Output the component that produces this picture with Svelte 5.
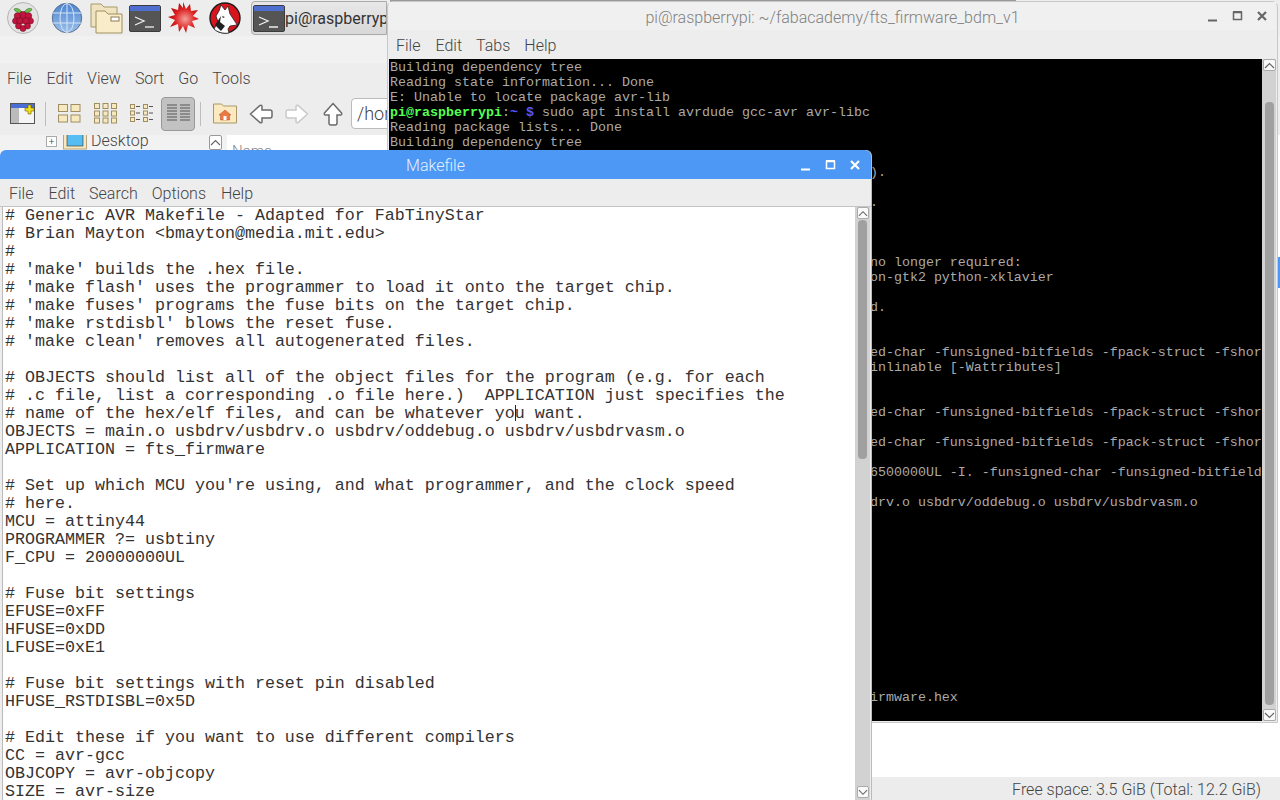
<script>
  const pad = " ".repeat(60);
  const termLines = [
    "Building dependency tree",
    "Reading state information... Done",
    "E: Unable to locate package avr-lib",
    null,
    "Reading package lists... Done",
    "Building dependency tree",
    "",
    pad + ").",
    "",
    pad + ".",
    "", "", "",
    pad + "no longer required:",
    pad + "on-gtk2 python-xklavier",
    "",
    pad + "d.",
    "", "",
    pad + "ed-char -funsigned-bitfields -fpack-struct -fshor",
    pad + "inlinable [-Wattributes]",
    "", "",
    pad + "ed-char -funsigned-bitfields -fpack-struct -fshor",
    "",
    pad + "ed-char -funsigned-bitfields -fpack-struct -fshor",
    "",
    pad + "6500000UL -I. -funsigned-char -funsigned-bitfield",
    "",
    pad + "drv.o usbdrv/oddebug.o usbdrv/usbdrvasm.o",
    "", "", "", "", "", "", "", "", "", "", "", "",
    pad + "irmware.hex",
  ];

  const makefile = `# Generic AVR Makefile - Adapted for FabTinyStar
# Brian Mayton <bmayton@media.mit.edu>
#
# 'make' builds the .hex file.
# 'make flash' uses the programmer to load it onto the target chip.
# 'make fuses' programs the fuse bits on the target chip.
# 'make rstdisbl' blows the reset fuse.
# 'make clean' removes all autogenerated files.

# OBJECTS should list all of the object files for the program (e.g. for each
# .c file, list a corresponding .o file here.)  APPLICATION just specifies the
# name of the hex/elf files, and can be whatever you want.
OBJECTS = main.o usbdrv/usbdrv.o usbdrv/oddebug.o usbdrv/usbdrvasm.o
APPLICATION = fts_firmware

# Set up which MCU you're using, and what programmer, and the clock speed
# here.
MCU = attiny44
PROGRAMMER ?= usbtiny
F_CPU = 20000000UL

# Fuse bit settings
EFUSE=0xFF
HFUSE=0xDD
LFUSE=0xE1

# Fuse bit settings with reset pin disabled
HFUSE_RSTDISBL=0x5D

# Edit these if you want to use different compilers
CC = avr-gcc
OBJCOPY = avr-objcopy
SIZE = avr-size`;
</script>

{#snippet termIcon(w, h)}
  <svg width={w} height={h} viewBox="0 0 32 27">
    <rect x="0.5" y="0.5" width="31" height="26" rx="1.5" fill="#555" stroke="#3c3c3c" />
    <rect x="1" y="1" width="30" height="5" fill="#4f6fd0" />
    <path d="M6 12l9 4-9 4" fill="none" stroke="#eee" stroke-width="1.3" />
    <path d="M16 22h9" stroke="#eee" stroke-width="1.3" />
  </svg>
{/snippet}

{#snippet folderMini(x, y, w, h)}
  <rect {x} {y} width={w} height={h} fill="#f6e9c0" stroke="#a08e62" />
{/snippet}

{#snippet arrow(color, rotate)}
  <svg width="24" height="24" viewBox="0 0 24 24">
    <path
      d="M1.5 12 11 3.5q2-.8 2 1v3.5h8q2 0 2 2v4q0 2-2 2h-8v3.500q0 1.800-2 1z"
      fill="#fff"
      stroke={color}
      stroke-width="1.500"
      transform="rotate({rotate} 12 12)"
    />
  </svg>
{/snippet}

{#snippet chevron(up)}
  <svg width="11" height="7" viewBox="0 0 11 7">
    <path d={up ? "M1 6l4.500-4.500L10 6" : "M1 1l4.500 4.500L10 1"} fill="none" stroke="#666" stroke-width="1.200" />
  </svg>
{/snippet}

{#snippet winButtons(color)}
  <div class="controls">
    <svg width="14" height="14" viewBox="0 0 14 14"><path d="M1 11.500h9" stroke={color} stroke-width="2" /></svg>
    <svg width="14" height="14" viewBox="0 0 14 14"><path d="M2.500 3.500h8v7h-8z" fill="none" stroke={color} stroke-width="1.500" /><path d="M2 3h9" stroke={color} stroke-width="2" /></svg>
    <svg width="14" height="14" viewBox="0 0 14 14"><path d="M3 3l8 8M11 3l-8 8" stroke={color} stroke-width="2.200" /></svg>
  </div>
{/snippet}

<div class="desktop">
  <header class="panel">
    <div class="launchers">
      <svg class="app" width="34" height="34" viewBox="0 0 34 34">
        <circle cx="17" cy="17" r="15.500" fill="#e4e4e4" stroke="#b5b5b5" />
        <path d="M16 11c-3-4-6-4-8-3 1 3 4 4 8 3zM18 11c3-4 6-4 8-3-1 3-4 4-8 3z" fill="#6cc04a" stroke="#2d6b22" stroke-width=".6" />
        <g fill="#c3143c" stroke="#5c0a22" stroke-width=".5">
          <circle cx="17" cy="14" r="3.600" /><circle cx="11.500" cy="15" r="3.300" /><circle cx="22.500" cy="15" r="3.300" />
          <circle cx="9.500" cy="20" r="3" /><circle cx="24.500" cy="20" r="3" /><circle cx="14" cy="20" r="3.400" />
          <circle cx="20" cy="20" r="3.400" /><circle cx="12.500" cy="25" r="3" /><circle cx="21.500" cy="25" r="3" /><circle cx="17" cy="27.500" r="3" />
        </g>
      </svg>
      <svg class="app globe" width="32" height="32" viewBox="0 0 32 32">
        <defs><linearGradient id="gl" x1="0" y1="0" x2="0" y2="1"><stop offset="0" stop-color="#4a83d0" /><stop offset="1" stop-color="#9cc0ea" /></linearGradient></defs>
        <circle cx="16" cy="16" r="14.700" fill="url(#gl)" stroke="#58708e" />
        <g fill="none" stroke="#d5e4f6" stroke-width="1">
          <ellipse cx="16" cy="16" rx="7" ry="14.500" /><path d="M16 1.500v29M2 11h28M2 21h28" />
        </g>
      </svg>
      <svg class="app folder" width="34" height="32" viewBox="0 0 34 32">
        <path d="M1 2h10l3 3h13v20H1z" fill="#efe3c0" stroke="#a89868" />
        <path d="M6 9h9l3 3h14v19H6z" fill="#f8edc8" stroke="#a08e62" />
        <rect x="21" y="15" width="8" height="4" fill="#fff" stroke="#8b7c58" />
      </svg>
      <span class="app term">{@render termIcon(32, 27)}</span>
      <svg class="app star" width="32" height="32" viewBox="0 0 32 32">
        <defs><radialGradient id="st" cx=".55" cy=".55" r=".55"><stop offset="0" stop-color="#f4a09a" /><stop offset=".6" stop-color="#dd2222" /><stop offset="1" stop-color="#a80d0d" /></radialGradient></defs>
        <path d="M16 0l3 7 4-5 1 7 7-1-5 6 6 3-7 2 3 7-7-3-2 8-3-7-4 6-1-8-8 3 5-7-7-3 7-2-4-7 7 2 1-7 4 5z" fill="url(#st)" />
      </svg>
      <svg class="app wolf" width="32" height="32" viewBox="0 0 32 32">
        <circle cx="16" cy="16" r="15" fill="#d8141c" stroke="#1a1a1a" stroke-width="1.400" />
        <path d="M12 3l4 5 3-4 2 8 6 9 1 2-7 1-2 3 1 4c-6 1-12-1-15-4l4-7-2-6 3-5z" fill="#fff" stroke="#222" stroke-width=".8" />
        <path d="M13 14l3 1-2 1zM6 23l6-9-1 6 5 4-4 5z" fill="#222" />
      </svg>
    </div>
    <div class="task">
      {@render termIcon(32, 27)}
      <span>pi@raspberrypi: ~/fabacademy</span>
    </div>
    <div class="task-edge"></div>
  </header>

  <main class="fm">
    <div class="fm-title"></div>
    <nav class="menu fm-menu">
      <span>File</span><span>Edit</span><span>View</span><span>Sort</span><span>Go</span><span>Tools</span>
    </nav>
    <div class="toolbar">
      <button class="tool">
        <svg width="25" height="21" viewBox="0 0 25 21">
          <rect x=".5" y=".5" width="24" height="20" fill="#f5f5f5" stroke="#555" />
          <rect x="1" y="1" width="23" height="4" fill="#4a6ed6" />
          <rect x="1" y="5" width="8" height="15" fill="#bbb" />
          <path d="M18 2h3v3h3v3h-3v3h-3V8h-3V5h3z" fill="#f4e020" stroke="#6b6200" stroke-width=".6" />
        </svg>
      </button>
      <i class="sep"></i>
      <button class="tool">
        <svg width="23" height="19" viewBox="0 0 23 19">
          {@render folderMini(.5, .5, 9, 7)}{@render folderMini(13, .5, 9, 7)}{@render folderMini(.5, 11, 9, 7)}{@render folderMini(13, 11, 9, 7)}
        </svg>
      </button>
      <button class="tool">
        <svg width="23" height="21" viewBox="0 0 23 21">
          {#each [0, 8.500, 17] as x}
            {#each [.5, 8, 15] as y}
              {@render folderMini(x + .5, y, 5, 5)}
            {/each}
          {/each}
        </svg>
      </button>
      <button class="tool">
        <svg width="23" height="20" viewBox="0 0 23 20">
          {#each [0, 13] as x}
            {#each [.5, 7, 13.500] as y}
              {@render folderMini(x + .5, y, 4, 4)}
              <path d="M{x + 6} {y + 2}h4" stroke="#555" />
            {/each}
          {/each}
        </svg>
      </button>
      <button class="tool active">
        <svg width="23" height="19" viewBox="0 0 23 19">
          {#each [1, 4, 7, 10, 13, 16] as y}
            <path d="M0 {y}h10M13 {y}h10" stroke="#555" />
          {/each}
        </svg>
      </button>
      <i class="sep sep2"></i>
      <button class="tool home">
        <svg width="24" height="21" viewBox="0 0 24 21">
          <path d="M.5 1h8l2 2h13v17H.5z" fill="#fbeac0" stroke="#a89868" />
          <path d="M12 7l6 5h-1.500v5h-9v-5H6z" fill="#ea7a45" stroke="#b5482a" stroke-width=".5" />
          <rect x="10.500" y="13" width="3" height="4" fill="#fff" />
        </svg>
      </button>
      <button class="tool">{@render arrow("#6b6b6b", 0)}</button>
      <button class="tool">{@render arrow("#c9c9c9", 180)}</button>
      <button class="tool">{@render arrow("#6b6b6b", 90)}</button>
      <div class="path">/home/pi/fabacademy</div>
    </div>
    <div class="fm-body">
      <aside class="tree">
        <div class="tree-row">
          <span class="plus">+</span>
          <svg width="24" height="15" viewBox="0 0 24 15">
            <rect x=".5" y="-4" width="23" height="18" fill="#f6e9c0" stroke="#b5a57c" />
            <rect x="4" y="-1" width="16" height="12" fill="#56bdf2" stroke="#333" stroke-width=".6" />
          </svg>
          <span class="tree-label">Desktop</span>
        </div>
        <div class="tree-up">{@render chevron(true)}</div>
      </aside>
      <section class="files">
        <div class="col">Name</div>
        <div class="selected"></div>
        <div class="status">Free space: 3.5 GiB (Total: 12.2 GiB)</div>
      </section>
    </div>
  </main>

  <section class="window terminal">
    <div class="term-title">
      <span>pi@raspberrypi: ~/fabacademy/fts_firmware_bdm_v1</span>
      {@render winButtons("#666")}
    </div>
    <nav class="menu term-menu">
      <span>File</span><span>Edit</span><span>Tabs</span><span>Help</span>
    </nav>
    <div class="term-body">
      <div class="term-text">
        {#each termLines as line}
          {#if line === null}
            <div class="tl"><b class="g">pi@raspberrypi</b>:<b class="bl">~ $</b> sudo apt install avrdude gcc-avr avr-libc</div>
          {:else}
            <div class="tl">{line}</div>
          {/if}
        {/each}
      </div>
      <div class="scroll term-scroll">
        <div class="sbtn">{@render chevron(true)}</div>
        <div class="track"><div class="thumb"></div></div>
        <div class="sbtn">{@render chevron(false)}</div>
      </div>
    </div>
  </section>

  <section class="window editor">
    <div class="ed-title">
      <span>Makefile</span>
      {@render winButtons("#fff")}
    </div>
    <nav class="menu ed-menu">
      <span>File</span><span>Edit</span><span>Search</span><span class="wide">Options</span><span>Help</span>
    </nav>
    <div class="ed-body">
      <pre class="code">{makefile}</pre>
      <div class="ibeam"></div>
      <div class="scroll ed-scroll">
        <div class="sbtn">{@render chevron(true)}</div>
        <div class="track"><div class="thumb"></div></div>
        <div class="sbtn">{@render chevron(false)}</div>
      </div>
    </div>
  </section>
</div>

<style>
  :global(body) {
    margin: 0;
    overflow: hidden;
  }

  .desktop {
    position: relative;
    width: 1280px;
    height: 800px;
    overflow: hidden;
    display: flex;
    flex-direction: column;
    background: #fff;
    font-family: Roboto, "Liberation Sans", sans-serif;
    font-weight: 300;
    font-size: 16px;
    color: #444;
  }

  .panel {
    position: relative;
    height: 36px;
    flex: none;
    display: flex;
    align-items: center;
    background: #ededed;
  }

  .launchers {
    display: flex;
    align-items: center;
    width: 251px;
    flex: none;
  }

  .app {
    display: block;
    flex: none;
  }
  .launchers > :first-child { margin-left: 6px; }
  .globe { margin-left: 11px; }
  .folder { margin-left: 7px; }
  .term { margin: 4px 0 0 5px; }
  .star { margin-left: 6px; }
  .wolf { margin-left: 10px; }

  .task {
    width: 136px;
    height: 34px;
    flex: none;
    box-sizing: border-box;
    padding: 1px 0 0 1px;
    display: flex;
    align-items: center;
    overflow: hidden;
    white-space: nowrap;
    border: 1px solid #aaa;
    border-radius: 4px 0 0 4px;
    background: linear-gradient(#e8e8e8, #d8d8d8);
    color: #333;
    font-weight: 400;
  }

  .task svg {
    flex: none;
  }

  .task-edge {
    position: absolute;
    left: 390px;
    top: 0;
    width: 626px;
    height: 2px;
    background: #9a9a96;
  }

  .fm {
    flex: 1;
    min-height: 0;
    display: flex;
    flex-direction: column;
    background: #ededed;
  }

  .fm-title {
    height: 27px;
    flex: none;
    background: #f1f1f1;
  }

  .menu {
    display: flex;
    align-items: center;
    flex: none;
    box-sizing: border-box;
    padding-top: 2px;
    gap: 14px;
  }

  .menu > :first-child {
    margin-right: 1px;
  }

  .wide {
    margin-right: 1px;
  }

  .fm-menu {
    height: 29px;
    padding-left: 7px;
  }

  .toolbar {
    height: 43px;
    flex: none;
    padding-left: 4px;
    display: flex;
    align-items: center;
  }

  .tool {
    width: 36px;
    height: 36px;
    flex: none;
    padding: 0;
    border: 0;
    background: none;
    display: flex;
    align-items: center;
    justify-content: center;
  }

  .tool.active {
    width: 34px;
    height: 34px;
    margin-left: 2px;
    border: 1px solid #999;
    border-radius: 4px;
    background: #c2c2c2;
    box-sizing: border-box;
  }

  .home {
    margin-left: 6px;
  }

  .sep {
    width: 1px;
    height: 24px;
    margin: 0 5px;
    background: #bdbdbd;
    flex: none;
  }
  .sep2 { margin: 0 0 0 5px; }

  .path {
    width: 200px;
    height: 31px;
    flex: none;
    box-sizing: border-box;
    padding-left: 5px;
    border: 1px solid #bbb;
    border-radius: 4px;
    background: #fff;
    line-height: 29px;
    font-size: 18px;
    white-space: nowrap;
    overflow: hidden;
  }

  .fm-body {
    flex: 1;
    min-height: 0;
    display: flex;
  }

  .tree {
    width: 227px;
    flex: none;
    position: relative;
    background: #f2f2f2;
  }

  .tree-row {
    height: 15px;
    padding-left: 46px;
    display: flex;
    align-items: flex-start;
    overflow: hidden;
  }

  .plus {
    width: 9px;
    height: 9px;
    margin: 1px 6px 0 0;
    border: 1px solid #aaa;
    background: #fff;
    font-size: 10px;
    line-height: 9px;
    text-align: center;
  }

  .tree-label {
    margin-left: 4px;
    line-height: 11px;
  }

  .tree-up {
    position: absolute;
    left: 209px;
    top: 0;
    width: 11px;
    height: 13px;
    border: 1px solid #999;
    border-radius: 2px;
    background: #fff;
    display: flex;
    align-items: center;
    justify-content: center;
  }

  .files {
    flex: 1;
    min-width: 0;
    position: relative;
    display: flex;
    flex-direction: column;
    background: #fff;
  }

  .col {
    flex: 1;
    padding: 7px 0 0 5px;
    color: #888;
    font-size: 15px;
  }

  .selected {
    position: absolute;
    right: 0;
    top: 122px;
    width: 2px;
    height: 31px;
    background: #4d98f5;
  }

  .status {
    height: 23px;
    flex: none;
    box-sizing: border-box;
    padding-right: 19px;
    text-align: right;
    line-height: 26px;
    background: #ececec;
    color: #444;
  }

  .window {
    position: absolute;
    display: flex;
    flex-direction: column;
    box-sizing: border-box;
  }

  .controls {
    position: absolute;
    top: 0;
    bottom: 0;
    display: flex;
    align-items: center;
    gap: 10px;
  }

  .terminal {
    left: 387px;
    top: 1px;
    width: 891px;
    height: 722px;
    padding: 0 1px 1px;
    border: 1px solid #c8c8c8;
    border-radius: 6px 6px 0 0;
    background: #ededed;
  }

  .term-title {
    position: relative;
    height: 28px;
    flex: none;
    box-sizing: border-box;
    padding-top: 2px;
    display: flex;
    align-items: center;
    justify-content: center;
    background: #f0f0f0;
    color: #808080;
    font-size: 16px;
  }

  .term-title .controls {
    right: 7px;
  }

  .term-menu {
    height: 29px;
    padding-left: 7px;
  }

  .term-body {
    flex: 1;
    min-height: 0;
    display: flex;
  }

  .term-text {
    flex: 1;
    min-width: 0;
    overflow: hidden;
    box-sizing: border-box;
    padding: 1px 0 0 1px;
    background: #000;
    color: #aaa;
    font-family: "Liberation Mono", monospace;
    font-weight: 400;
    font-size: 13.333px;
  }

  .tl {
    height: 15px;
    line-height: 15px;
    white-space: pre;
  }

  .g { color: #55ff55; }
  .bl { color: #5555ff; }

  .scroll {
    flex: none;
    display: flex;
    flex-direction: column;
    align-items: center;
    box-sizing: border-box;
    background: #d2d2d2;
  }

  .sbtn {
    width: 12px;
    height: 12px;
    flex: none;
    border: 1px solid #aaa;
    border-radius: 2px;
    background: #fafafa;
    display: flex;
    align-items: center;
    justify-content: center;
    box-sizing: border-box;
  }

  .track {
    flex: 1;
    min-height: 0;
    width: 100%;
    display: flex;
    justify-content: center;
  }

  .thumb {
    width: 9px;
    border-radius: 4px;
    background: #a0a0a0;
  }

  .term-scroll {
    width: 14px;
  }

  .term-scroll .thumb {
    height: 603px;
    margin-top: 31px;
  }

  .term-scroll .sbtn {
    width: 13px;
  }

  .editor {
    left: 0;
    top: 150px;
    width: 871px;
    height: 650px;
    border-radius: 6px 6px 0 0;
    background: #ededed;
    box-shadow: 1px 0 0 #bbb;
    overflow: hidden;
  }

  .ed-title {
    position: relative;
    height: 29px;
    flex: none;
    box-sizing: border-box;
    padding-top: 2px;
    display: flex;
    align-items: center;
    justify-content: center;
    background: #4d98f5;
    color: #e4f0ff;
    font-size: 16px;
  }

  .ed-title .controls {
    right: 9px;
  }

  .ed-menu {
    height: 28px;
    padding-left: 9px;
    border-bottom: 1px solid #c4c4c4;
  }

  .ed-body {
    position: relative;
    flex: 1;
    min-height: 0;
    display: flex;
    padding-left: 2px;
    padding-right: 1px;
  }

  .code {
    flex: 1;
    min-width: 0;
    margin: 0;
    padding: 0 0 0 2px;
    overflow: hidden;
    background: #fff;
    border-left: 1px solid #bbb;
    box-sizing: border-box;
    color: #333;
    font-family: "Liberation Mono", monospace;
    font-weight: 400;
    font-size: 16.667px;
    line-height: 18px;
  }

  .ibeam {
    position: absolute;
    left: 515px;
    top: 198px;
    width: 1px;
    height: 16px;
    background: #222;
  }

  .ed-scroll {
    width: 15px;
    padding-bottom: 2px;
  }

  .ed-scroll .thumb {
    height: 239px;
    margin-top: 1px;
  }
</style>
